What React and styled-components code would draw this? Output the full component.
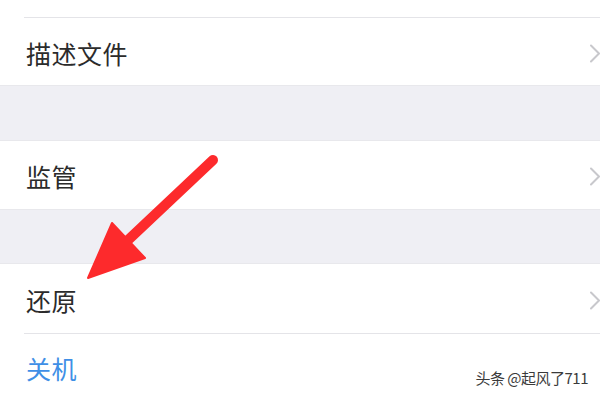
import styled, { createGlobalStyle } from "styled-components"

const GlobalStyle = createGlobalStyle`
    html, body {
        margin: 0;
        padding: 0;
        background: #ffffff;
    }
    body {
        font-family: "Noto Sans CJK SC", "Noto Sans", sans-serif;
    }
`

const Screen = styled.div`
    position: relative;
    width: 600px;
    height: 400px;
    overflow: hidden;
    background: #ffffff;
    display: flex;
    flex-direction: column;
`

const Stub = styled.div`
    height: 17px;
    background: #ffffff;
`

const Cell = styled.div`
    height: ${p => p.$h}px;
    background: #ffffff;
    padding-left: 24px;
    display: flex;
    flex-shrink: 0;
`

const CellInner = styled.div`
    flex: 1;
    display: flex;
    align-items: center;
    justify-content: space-between;
    padding-left: 2px;
    padding-top: 3px;
    border-top: ${p => (p.$divider ? "1px solid #e4e4e8" : "none")};
`

const Label = styled.span`
    font-size: 25px;
    line-height: 1;
    color: ${p => (p.$action ? "#3f8fe6" : "#2b2b2b")};
    letter-spacing: 0.5px;
`

const Chevron = styled.svg`
    width: 12px;
    height: 19px;
    margin-right: -1px;
    flex-shrink: 0;
`

const Gap = styled.div`
    height: ${p => p.$h}px;
    flex-shrink: 0;
    background: #efeff4;
    border-top: 1px solid #e8e8ec;
    border-bottom: 1px solid #e8e8ec;
    box-sizing: border-box;
`

const Arrow = styled.svg`
    position: absolute;
    left: 0;
    top: 0;
    width: 600px;
    height: 400px;
    pointer-events: none;
`

const Watermark = styled.div`
    position: absolute;
    right: 12px;
    bottom: 12px;
    font-size: 15px;
    color: #3a3a3a;
    text-shadow: 0 0 2px #ffffff, 0 0 1px #ffffff;
    letter-spacing: -0.5px;
`

function Row({ label, h, divider, action, chevron = true }) {
    return (
        <Cell $h={h}>
            <CellInner $divider={divider}>
                <Label $action={action}>{label}</Label>
                {chevron && (
                    <Chevron viewBox="0 0 12 19">
                        <path d="M2 1.5 L10 9.5 L2 17.5" fill="none" stroke="#c8c8cc" strokeWidth="2" strokeLinecap="round" strokeLinejoin="round" />
                    </Chevron>
                )}
            </CellInner>
        </Cell>
    )
}

export default function App() {
    return (
        <>
            <GlobalStyle />
            <Screen>
                <Stub />
                <Row label="描述文件" h={68} divider />
                <Gap $h={56} />
                <Row label="监管" h={68} />
                <Gap $h={55} />
                <Row label="还原" h={69} />
                <Row label="关机" h={67} divider action chevron={false} />

                <Arrow viewBox="0 0 600 400">
                    <line x1="213" y1="160" x2="126" y2="242" stroke="#fd2a2c" strokeWidth="10" strokeLinecap="round" />
                    <polygon points="88,278 112,223 145,258" fill="#fd2a2c" stroke="#fd2a2c" strokeWidth="2" strokeLinejoin="round" />
                </Arrow>

                <Watermark>头条 @起风了711</Watermark>
            </Screen>
        </>
    )
}
